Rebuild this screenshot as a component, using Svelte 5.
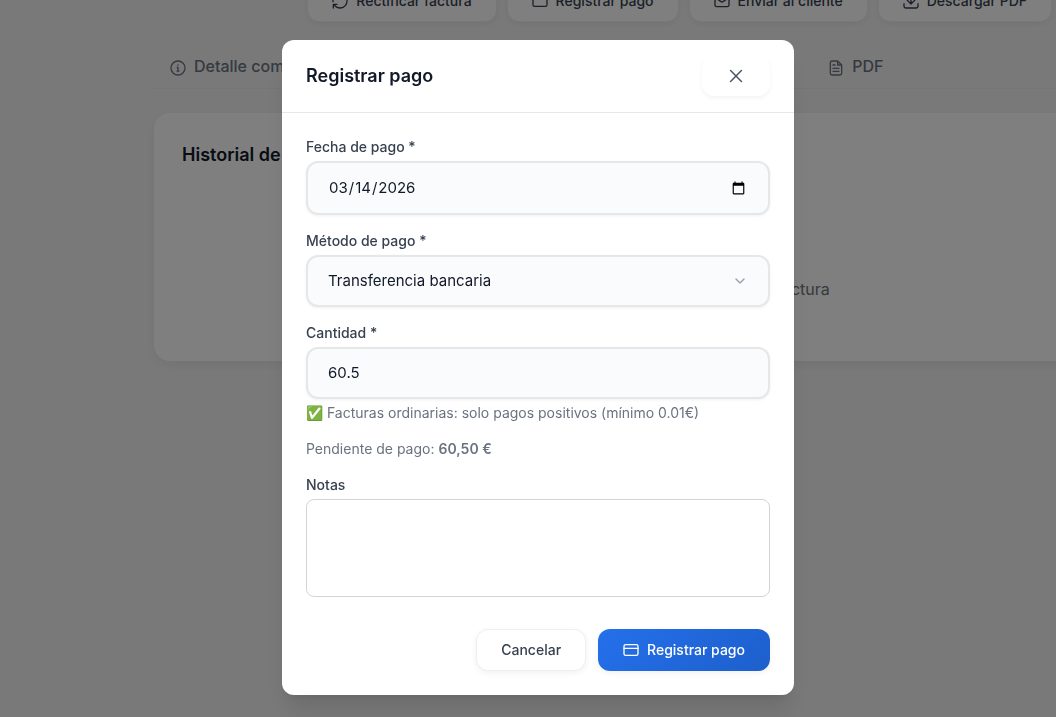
<script>
  let date = $state('2026-03-14');
  let method = $state('transfer');
  let amount = $state('60.5');
  let notes = $state('');
</script>

{#snippet card()}
  <svg class="icon" viewBox="0 0 24 24" aria-hidden="true"><rect x="1.500" y="4" width="21" height="16" rx="2.500" /><path d="M1.500 9.500h21" /></svg>
{/snippet}

<div class="page">
  <main>
    <div class="actions">
      <button class="btn" type="button">
        <svg class="icon" viewBox="0 0 24 24" aria-hidden="true"><path d="M1.500 13a10.500 10.500 0 0 1 10-11.500c4 0 7 2 9 5.500M22.500 11a10.500 10.500 0 0 1-10 11.500c-4 0-7.500-2-9.500-5.500M22 1.500V7h-5.500M2 22.500V17h5.500" /></svg>
        Rectificar factura
      </button>
      <button class="btn" type="button">{@render card()}Registrar pago</button>
      <button class="btn" type="button">
        <svg class="icon" viewBox="0 0 24 24" aria-hidden="true"><rect x="1.500" y="3" width="21" height="17.500" rx="2.500" /><path d="m2 7 8.600 6a2.500 2.500 0 0 0 2.800 0L22 7" /></svg>
        Enviar al cliente
      </button>
      <button class="btn" type="button">
        <svg class="icon" viewBox="0 0 24 24" aria-hidden="true"><path d="M1.500 16v4A2.500 2.500 0 0 0 4 22.500h16a2.500 2.500 0 0 0 2.500-2.500v-4M17.500 11 12 16.500 6.500 11M12 16.500V1.500" /></svg>
        Descargar PDF
      </button>
    </div>

    <nav class="tabs">
      <button class="tab" type="button">
        <svg class="icon" viewBox="0 0 24 24" aria-hidden="true"><circle cx="12" cy="12" r="10.500" /><path d="M10.800 11.200H12v5.400M10.500 16.600h3M12 7.400v.500" /></svg>
        Detalle completo
      </button>
      <button class="tab" type="button">
        <svg class="icon" viewBox="0 0 24 24" aria-hidden="true"><path d="M14.500 1.500H6A2.500 2.500 0 0 0 3.500 4v16A2.500 2.500 0 0 0 6 22.500h12a2.500 2.500 0 0 0 2.500-2.500V7.500ZM7.500 7.500h3M7.500 12.500h9M7.500 17h9M14.500 1.500v6h6" /></svg>
        PDF
      </button>
    </nav>

    <section class="history">
      <h2>Historial de pagos</h2>
      <p>No hay pagos registrados para esta factura</p>
    </section>
  </main>
</div>

<div class="overlay">
  <div class="modal" role="dialog" aria-modal="true" aria-labelledby="modal-title">
    <header>
      <h3 id="modal-title">Registrar pago</h3>
      <button class="close" type="button" aria-label="Cerrar">
        <svg viewBox="0 0 24 24" aria-hidden="true"><path d="M5.500 5.500l13 13M18.500 5.500l-13 13" /></svg>
      </button>
    </header>

    <form onsubmit={(e) => e.preventDefault()}>
      <div class="field">
        <label for="date">Fecha de pago *</label>
        <input id="date" class="control date" type="date" bind:value={date} />
      </div>

      <div class="field">
        <label for="method">Método de pago *</label>
        <select id="method" class="control" bind:value={method}>
          <option value="transfer">Transferencia bancaria</option>
        </select>
      </div>

      <div class="field">
        <label for="amount">Cantidad *</label>
        <input id="amount" class="control" type="text" inputmode="decimal" bind:value={amount} />
        <p class="hint">✅ Facturas ordinarias: solo pagos positivos (mínimo 0.01€)</p>
      </div>

      <p class="hint">Pendiente de pago: <strong>60,50 €</strong></p>

      <div class="field">
        <label for="notes">Notas</label>
        <textarea id="notes" rows="3" bind:value={notes}></textarea>
      </div>

      <footer>
        <button class="btn" type="button">Cancelar</button>
        <button class="btn primary" type="submit">{@render card()}Registrar pago</button>
      </footer>
    </form>
  </div>
</div>

<style>
  :global(body) {
    margin: 0;
    background: #f3f3f4;
    font-family: Inter, 'Noto Sans', sans-serif;
    color: #111827;
  }

  * {
    box-sizing: border-box;
  }

  button,
  input,
  select,
  textarea {
    font-family: inherit;
  }

  h2,
  h3,
  p {
    margin: 0;
  }

  .page {
    min-height: 100vh;
    overflow: hidden;
    background: #f3f3f4;
  }

  main {
    margin: -20px -122px 0 154px;
  }

  .actions {
    display: flex;
    gap: 10px;
    padding-right: 126px;
    justify-content: flex-end;
  }

  .icon {
    width: 16px;
    height: 16px;
    flex: none;
    fill: none;
    stroke: currentColor;
    stroke-width: 2;
    stroke-linecap: round;
    stroke-linejoin: round;
  }

  .btn {
    display: inline-flex;
    align-items: center;
    justify-content: center;
    gap: 8px;
    padding: 10px 24px;
    border: 1px solid #eeeff1;
    border-radius: 12px;
    background: #fff;
    color: #374151;
    font-size: 14px;
    font-weight: 500;
    line-height: 20px;
    white-space: nowrap;
    box-shadow: 0 2px 6px rgba(0, 0, 0, 0.06);
  }

  .primary {
    border-color: transparent;
    background: linear-gradient(135deg, #2470eb, #1d5fcc) border-box;
    color: #fff;
  }

  .tabs {
    display: grid;
    grid-template-columns: 9fr 5fr;
    margin-top: 24px;
    border-bottom: 1px solid #e8eaed;
  }

  .tab {
    display: flex;
    align-items: center;
    gap: 8px;
    padding: 8px 16px 10px;
    border: 0;
    background: none;
    color: #6b7280;
    font-size: 16px;
    font-weight: 500;
    line-height: 24px;
  }

  .tab .icon {
    margin-top: 3px;
  }

  .history {
    margin-top: 24px;
    padding: 28px 28px 60px;
    border-radius: 16px;
    background: #fff;
    box-shadow: 0 4px 12px rgba(0, 0, 0, 0.06);
  }

  .history h2 {
    font-size: 18px;
    font-weight: 600;
    line-height: 28px;
  }

  .history p {
    margin-top: 108px;
    color: #6b7280;
    text-align: center;
    font-size: 16px;
    line-height: 24px;
  }

  .overlay {
    position: fixed;
    inset: 0;
    display: flex;
    align-items: flex-start;
    justify-content: center;
    padding: 40px 16px 16px 36px;
    overflow: auto;
    background: rgba(0, 0, 0, 0.5);
  }

  .modal {
    width: 100%;
    max-width: 512px;
    border-radius: 12px;
    background: #fff;
    box-shadow: 0 20px 25px -5px rgba(0, 0, 0, 0.1), 0 8px 10px -6px rgba(0, 0, 0, 0.1);
  }

  header {
    display: flex;
    align-items: center;
    justify-content: space-between;
    padding: 16px 24px;
    border-bottom: 1px solid #e5e7eb;
  }

  h3 {
    font-size: 18px;
    font-weight: 600;
    line-height: 28px;
  }

  .close {
    display: flex;
    padding: 10px 24px;
    border: 0;
    border-radius: 12px;
    background: #fff;
    color: #4b5563;
    box-shadow: 0 2px 4px rgba(0, 0, 0, 0.05);
  }

  .close svg {
    width: 20px;
    height: 20px;
    fill: none;
    stroke: currentColor;
    stroke-width: 1.8;
    stroke-linecap: round;
  }

  form {
    display: flex;
    flex-direction: column;
    gap: 16px;
    padding: 24px;
  }

  .field {
    display: flex;
    flex-direction: column;
    gap: 4px;
  }

  label {
    color: #374151;
    font-size: 14px;
    font-weight: 500;
    line-height: 20px;
  }

  .control {
    width: 100%;
    padding: 14px 20px;
    border: 2px solid #e5e7e9;
    border-radius: 12px;
    background: #f9fbfd;
    color: #111827;
    font-size: 15px;
    line-height: 20px;
    box-shadow: 0 1px 3px rgba(0, 0, 0, 0.06);
  }

  .date {
    height: 54px;
  }

  select.control {
    padding-right: 40px;
    appearance: none;
    background: #f9fbfd
      url("data:image/svg+xml,%3Csvg xmlns='http://www.w3.org/2000/svg' viewBox='0 0 20 20' fill='none' stroke='%239ca3af' stroke-width='1.5' stroke-linecap='round' stroke-linejoin='round'%3E%3Cpath d='M6 8l4 4 4-4'/%3E%3C/svg%3E")
      right 18px center / 20px no-repeat;
  }

  .hint {
    color: #6b7280;
    font-size: 14px;
    line-height: 20px;
  }

  .hint strong {
    font-weight: 600;
  }

  textarea {
    display: block;
    width: 100%;
    height: 98px;
    padding: 8px 12px;
    border: 1px solid #d1d5db;
    border-radius: 8px;
    background: #fff;
    font-size: 16px;
    line-height: 24px;
    resize: none;
  }

  footer {
    display: flex;
    justify-content: flex-end;
    gap: 12px;
    padding-top: 16px;
  }
</style>
